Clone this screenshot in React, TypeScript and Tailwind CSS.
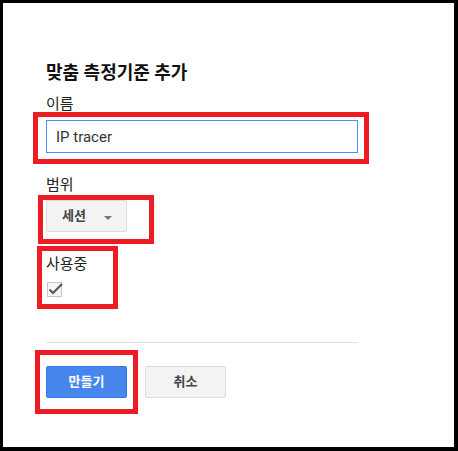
import React from 'react';

const font = { fontFamily: 'Roboto, "Noto Sans CJK KR", sans-serif' };

// red annotation frames drawn over the form
const Marker: React.FC<{ className: string }> = ({ className }) => (
  <div className={`absolute border-[5px] border-[#ed1c24] pointer-events-none ${className}`} />
);

const App: React.FC = () => {
  return (
    <div className="relative w-[458px] h-[451px] bg-black pt-[3px] pl-[3px] pr-[4px] pb-[4px]" style={font}>
      <div className="w-full h-full bg-white pl-[43px] pt-[58px]">
        <h1 className="text-[18px] leading-[24px] font-bold text-[#111]">맞춤 측정기준 추가</h1>

        <label className="block mt-[9px] text-[15px] leading-[20px] text-[#222]">이름</label>
        <input
          readOnly
          value="IP tracer"
          className="mt-[6px] block w-[312px] h-[33px] border border-[#4d90fe] px-[9px] text-[15px] text-[#333] outline-none"
        />

        <div className="mt-[22px] text-[15px] leading-[20px] text-[#222]">범위</div>
        <button className="mt-[5px] flex items-center w-[81px] h-[32px] bg-[#f3f3f3] border border-[#dcdcdc] rounded-[2px] pl-[15px] text-[13px] font-bold text-[#444]">
          세션
          <span className="ml-[18px] mt-[3px] w-0 h-0 border-l-[4px] border-r-[4px] border-t-[4px] border-l-transparent border-r-transparent border-t-[#777]" />
        </button>

        <div className="mt-[22px] text-[15px] leading-[20px] text-[#222]">사용중</div>
        <div className="relative mt-[8px] ml-[1px] w-[15px] h-[15px] border border-[#c6c6c6] bg-[#f6f6f6]">
          <svg className="absolute left-[0px] top-[-3px]" width="16" height="16" viewBox="0 0 16 16">
            <path d="M1.5 9.5 L5 13 L14 4" fill="none" stroke="#5a5a5a" strokeWidth="2.2" />
          </svg>
        </div>

        <div className="mt-[45px] w-[312px] h-px bg-[#e0e0e0]" />

        <div className="mt-[23px] flex gap-[18px]">
          <button className="w-[81px] h-[32px] rounded-[2px] bg-[#4787ed] border border-[#3079ed] text-white text-[13px] font-bold">
            만들기
          </button>
          <button className="w-[81px] h-[32px] rounded-[2px] bg-[#f3f3f3] border border-[#dcdcdc] text-[#444] text-[13px] font-bold">
            취소
          </button>
        </div>
      </div>

      <Marker className="left-[33px] top-[112px] w-[336px] h-[52px]" />
      <Marker className="left-[38px] top-[195px] w-[116px] h-[49px]" />
      <Marker className="left-[37px] top-[246px] w-[81px] h-[63px]" />
      <Marker className="left-[35px] top-[350px] w-[103px] h-[64px]" />
    </div>
  );
};

export default App;
